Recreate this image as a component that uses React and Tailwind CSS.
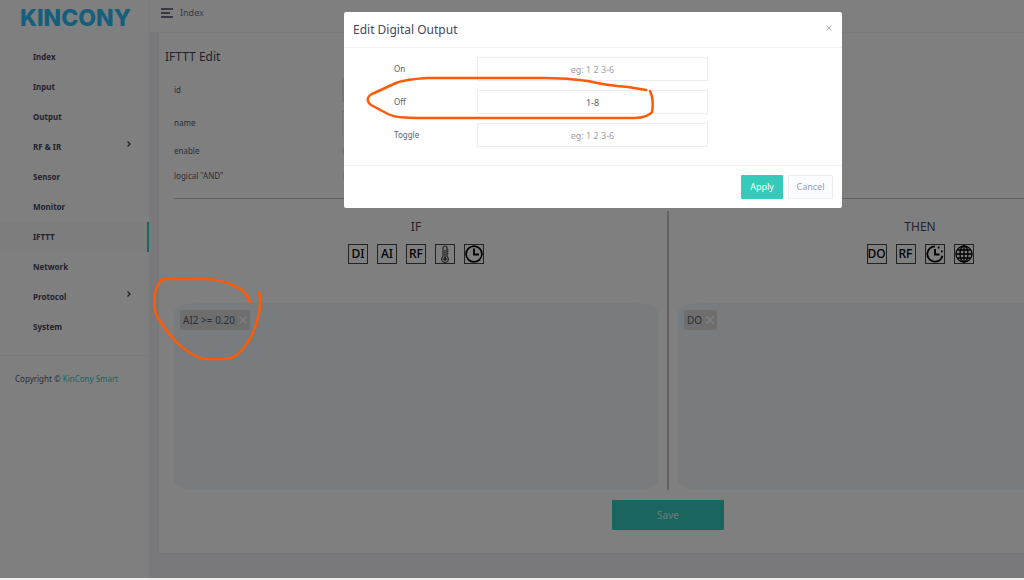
import React, { useState } from "react";

const menu = [
  { name: "Index" },
  { name: "Input" },
  { name: "Output" },
  { name: "RF & IR", sub: true },
  { name: "Sensor" },
  { name: "Monitor" },
  { name: "IFTTT", active: true },
  { name: "Network" },
  { name: "Protocol", sub: true },
  { name: "System" },
];

function Sidebar() {
  return (
    <aside className="w-[150px] shrink-0 bg-white border-r border-gray-100">
      <div className="h-[42px] pl-5 pt-1 font-[Inter,sans-serif] text-[23px] leading-7 font-extrabold text-[#2abcf8]">
        KINCONY
      </div>
      <nav>
        {menu.map((item) => (
          <a
            key={item.name}
            href="#"
            className={
              item.active
                ? "flex h-[30px] items-center justify-between pl-[33px] pr-4 font-bold text-[#48465b] bg-[#fafafc] border-r-2 border-[#34cbbb]"
                : "flex h-[30px] items-center justify-between pl-[33px] pr-4 font-bold text-[#48465b]"
            }
          >
            {item.name}
            {item.sub && (
              <svg
                viewBox="0 0 8 8"
                className="mb-1.5 h-2 w-2"
                fill="none"
                stroke="currentColor"
                strokeWidth="1.4"
              >
                <path d="M2.5 1.5 5 4 2.5 6.5" />
              </svg>
            )}
          </a>
        ))}
      </nav>
      <p className="mt-[13px] border-t border-gray-100 pl-[15px] pt-[17px] text-[#595d6e]">
        Copyright ©{" "}
        <a href="#" className="text-[#34cbbb]">
          KinCony Smart
        </a>
      </p>
    </aside>
  );
}

function IconButton({ label, children }) {
  return (
    <button
      type="button"
      aria-label={label}
      className="flex h-5 w-5 items-center justify-center overflow-hidden border border-[#444] text-[12px] leading-4 font-medium text-black"
    >
      {children}
    </button>
  );
}

function ThermometerIcon() {
  return (
    <svg viewBox="0 0 18 18" className="h-[18px] w-[18px] shrink-0" fill="none" stroke="#444">
      <path d="M7 11.5V3a2 2 0 0 1 4 0v8.5a3.3 3.3 0 1 1-4 0Z" strokeWidth="1.2" />
      <path d="M9 5v8" strokeWidth="1.2" />
      <circle cx="9" cy="14" r="1.3" fill="#444" />
      <path d="M11 4.5h1.5M11 6.5h1.5M11 8.5h1.5" strokeWidth=".8" />
    </svg>
  );
}

function ClockIcon() {
  return (
    <svg viewBox="0 0 18 18" className="h-[18px] w-[18px] shrink-0" fill="none" stroke="#000" strokeWidth="1.8">
      <circle cx="9" cy="9" r="7.9" />
      <path d="M9 3.5v6h5" />
    </svg>
  );
}

function DelayIcon() {
  return (
    <svg viewBox="0 0 18 18" className="h-[18px] w-[18px] shrink-0" fill="none" stroke="#000" strokeWidth="1.8">
      <path d="M9 1.3a7.7 7.7 0 1 0 7.5 9.5" />
      <path d="M9 4v5.5h4.5" />
      <path d="M11.7 2.5h1.8M15 6.3h1.8" />
    </svg>
  );
}

function GlobeIcon() {
  return (
    <svg viewBox="0 0 18 18" className="h-[18px] w-[18px] shrink-0" fill="none" stroke="#000" strokeWidth="1.3">
      <circle cx="9" cy="9" r="8" />
      <ellipse cx="9" cy="9" rx="4" ry="8" />
      <path d="M9 1v16M1 9h16M2.5 5h13M2.5 13h13" />
    </svg>
  );
}

function Chip({ text }) {
  return (
    <div className="flex h-5 items-center gap-1 rounded-xs bg-[#dcdcdc] px-[3px] text-[10px] text-[#595d6e]">
      {text}
      <button type="button" aria-label={"Remove " + text}>
        <svg viewBox="0 0 8 8" className="h-2 w-2" stroke="#fff" strokeWidth="1.4">
          <path d="m.5.5 7 7m0-7-7 7" />
        </svg>
      </button>
    </div>
  );
}

function Column({ title, icons, chip }) {
  return (
    <section className="flex flex-1 flex-col items-center pt-2">
      <h2 className="text-[12px] leading-4 text-[#48465b]">{title}</h2>
      <div className="mt-[9px] flex gap-[9px]">{icons}</div>
      <div className="mt-[39px] flex h-[187px] w-full items-start rounded-[5%] bg-[#f0f8ff] px-1.5 py-[7px]">
        <Chip text={chip} />
      </div>
    </section>
  );
}

function EditForm() {
  return (
    <main className="mx-[9px] h-[520px] bg-white px-[15px] shadow-xs">
      <h1 className="-ml-[9px] pt-4 text-[12px] leading-4 text-[#48465b]">IFTTT Edit</h1>
      <div className="mt-[13px] text-[#595d6e]">
        <div className="mb-[9px] flex h-6 items-center">
          <label htmlFor="id" className="w-[168px]">id</label>
          <input id="id" readOnly className="h-6 w-[485px] border border-gray-200 bg-[#f0f0f0]" />
        </div>
        <div className="mb-[3px] flex h-6 items-center">
          <label htmlFor="name" className="w-[168px]">name</label>
          <input id="name" className="h-6 w-[485px] border border-gray-200" />
        </div>
        <div className="flex h-[25px] items-center">
          <label htmlFor="enable" className="w-[168px]">enable</label>
          <input id="enable" type="checkbox" className="h-3 w-6 appearance-none rounded-full bg-gray-200" />
        </div>
        <div className="flex h-[25px] items-center">
          <label htmlFor="logical" className="w-[168px]">logical "AND"</label>
          <input id="logical" type="checkbox" className="h-3 w-6 appearance-none rounded-full bg-gray-200" />
        </div>
      </div>
      <hr className="mt-[10px] border-[#c4c4c4]" />
      <div className="mt-3 flex">
        <Column
          title="IF"
          chip="AI2 >= 0.20"
          icons={
            <>
              <IconButton label="DI">DI</IconButton>
              <IconButton label="AI">AI</IconButton>
              <IconButton label="RF">RF</IconButton>
              <IconButton label="Temperature"><ThermometerIcon /></IconButton>
              <IconButton label="Time"><ClockIcon /></IconButton>
            </>
          }
        />
        <div className="mx-[9px] w-0.5 bg-[#c8c4c4]" />
        <Column
          title="THEN"
          chip="DO"
          icons={
            <>
              <IconButton label="DO">DO</IconButton>
              <IconButton label="RF">RF</IconButton>
              <IconButton label="Delay"><DelayIcon /></IconButton>
              <IconButton label="Network"><GlobeIcon /></IconButton>
            </>
          }
        />
      </div>
      <button type="button" className="mx-auto mt-[10px] block h-[30px] w-28 rounded-[1px] bg-[#34cbbb] text-[10px] text-[#e0f5f3]">
        Save
      </button>
    </main>
  );
}

function OutputDialog() {
  const [values, setValues] = useState({ On: "", Off: "1-8", Toggle: "" });

  const handleChange = (e) => {
    setValues({ ...values, [e.target.name]: e.target.value });
  };

  return (
    <div
      role="dialog"
      aria-label="Edit Digital Output"
      className="w-[498px] rounded-xs bg-white text-[#595d6e]"
    >
      <div className="flex h-9 items-center justify-between border-b border-[#f2f3f8] px-[9px]">
        <h2 className="text-[12px] text-[#48465b]">Edit Digital Output</h2>
        <button type="button" aria-label="Close">
          <svg viewBox="0 0 8 8" className="mb-1 h-2 w-2" stroke="#a7a7b0" strokeWidth="1">
            <path d="m1.5 1.5 5 5m0-5-5 5" />
          </svg>
        </button>
      </div>
      <form className="flex h-[118px] flex-col gap-[9px] border-b border-[#f2f3f8] pl-[50px] pt-[9px]">
        {Object.keys(values).map((key) => (
          <div key={key} className="flex items-center">
            <label htmlFor={"out-" + key} className="w-[83px]">{key}</label>
            <input
              id={"out-" + key}
              name={key}
              value={values[key]}
              onChange={handleChange}
              placeholder="eg: 1 2 3-6"
              className="h-6 w-[231px] border border-[#ebedf2] text-center text-[9px] placeholder:text-[#a0a0a8] focus:outline-none"
            />
          </div>
        ))}
      </form>
      <div className="flex justify-end gap-[5px] px-[9px] py-[9px] text-[9px]">
        <button type="button" className="h-6 w-[42px] rounded-[1px] bg-[#34cbbb] text-white">Apply</button>
        <button type="button" className="h-6 w-[45px] rounded-[1px] border border-[#ebedf2] bg-[#fbfcff] text-[#959cb6]">
          Cancel
        </button>
      </div>
    </div>
  );
}

// hand drawn circles over the page
function Marks() {
  return (
    <svg
      className="pointer-events-none absolute left-0 top-0 h-[400px] w-[700px]"
      viewBox="0 0 700 400"
      fill="none"
      stroke="#ff5a05"
      strokeWidth="2.5"
      strokeLinecap="round"
      strokeLinejoin="round"
    >
      <path d="M646 90 628 87C614 86 600 84 588 81 574 79 562 78 545 78H427C412 79 403 80 396 83L372 94C366 97 367 102 371 105L388 114C396 118 405 118 440 118H635C643 118 650 115 652 112 653 106 653 97 650 91" />
      <path d="M250 302C247 293 242 289 232 285 222 280 213 279 205 279H167C159 279 157 286 155 293 154 302 154 312 158 318 165 329 173 340 183 348 191 354 197 358 204 359H227C235 358 239 353 243 349 252 338 257 324 259 313 261 304 260 297 259 292" />
    </svg>
  );
}

export default function App() {
  return (
    <div className="overflow-hidden font-['Noto_Sans',sans-serif] text-[8px] leading-3">
      <div className="relative flex min-h-screen min-w-[1186px] border-b-2 border-[#eee] bg-[#f2f3f8]">
        <Sidebar />
        <div className="flex-1">
          <header className="flex h-[33px] items-center gap-[7px] border-b border-gray-100 bg-white pb-1.5 pl-[11px] text-[9px] text-[#74788d]">
            <button type="button" aria-label="Menu">
              <svg viewBox="0 0 12 10" className="h-2.5 w-3" stroke="#48465b" strokeWidth="1.3">
                <path d="M0 1h12M0 5h9M0 9h12" />
              </svg>
            </button>
            Index
          </header>
          <EditForm />
        </div>
        <div className="absolute inset-0 flex items-start justify-center bg-black/50 pt-3">
          <OutputDialog />
        </div>
        <Marks />
      </div>
    </div>
  );
}
